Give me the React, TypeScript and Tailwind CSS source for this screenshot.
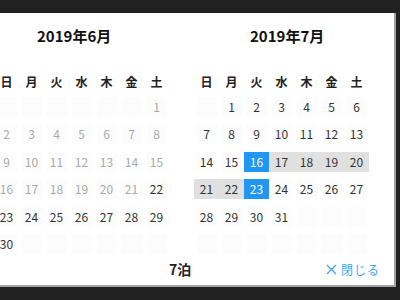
const WEEK = ["日", "月", "火", "水", "木", "金", "土"];

type Day = { n: number | null; tone?: "past" | "on"; sel?: boolean; range?: boolean };

function buildMonth(offset: number, total: number, mark: (d: number) => Day): Day[] {
  const cells: Day[] = [];
  for (let i = 0; i < offset; i++) cells.push({ n: null });
  for (let d = 1; d <= total; d++) cells.push(mark(d));
  while (cells.length < 42) cells.push({ n: null });
  return cells;
}

const june = buildMonth(6, 30, (d) => ({ n: d, tone: d < 22 ? "past" : "on" }));
const july = buildMonth(1, 31, (d) => ({
  n: d,
  tone: "on",
  sel: d === 16 || d === 23,
  range: d > 16 && d < 23,
}));

function Cell({ day }: { day: Day }) {
  if (day.sel) {
    return (
      <div className="flex h-[20px] items-center justify-center bg-[#2196f3] text-white">
        {day.n}
      </div>
    );
  }
  if (day.range) {
    return (
      <div className="flex h-[20px] items-center justify-center bg-[#e0e0e0] text-[#333]">
        {day.n}
      </div>
    );
  }
  return (
    <div className="flex h-[20px] items-center justify-center">
      <div
        className={
          "flex h-full w-[20px] items-center justify-center bg-[#fcfcfc] " +
          (day.tone === "past" ? "text-[#aaa]" : "text-[#333]")
        }
      >
        {day.n}
      </div>
    </div>
  );
}

function Month({ title, days, titlePad }: { title: string; days: Day[]; titlePad: string }) {
  return (
    <div className="w-[175px] shrink-0">
      <div className={"h-[20px] text-[15px] font-bold leading-[20px] text-[#111] whitespace-nowrap " + titlePad}>
        {title}
      </div>
      <div className="mt-[26px] grid grid-cols-7 text-center text-[12px] font-bold leading-[20px] text-[#222]">
        {WEEK.map((w) => (
          <div key={w}>{w}</div>
        ))}
      </div>
      <div className="mt-[5px] grid grid-cols-7 gap-y-[7.4px] text-[12px]">
        {days.map((d, i) => (
          <Cell key={i} day={d} />
        ))}
      </div>
    </div>
  );
}

export default function App() {
  return (
    <div
      className="h-[300px] w-[400px] overflow-hidden bg-[#212121] pt-[13px]"
      style={{ fontFamily: '"Noto Sans CJK JP", "Noto Sans", sans-serif' }}
    >
      <div className="h-[274px] w-[396px] overflow-hidden border-b-2 border-r-2 border-[#a3a3a3] bg-white">
        <div className="ml-[-6px] flex gap-[25px] pt-[13px]">
          <Month title="2019年6月" days={june} titlePad="pl-[43px]" />
          <Month title="2019年7月" days={july} titlePad="pl-[56px]" />
        </div>
        <div className="mt-[6px] flex h-[20px] items-center">
          <span className="ml-[169px] text-[14px] font-bold text-[#222]">7泊</span>
          <button className="ml-auto mr-[14px] flex items-center gap-[4px] text-[12px] tracking-[1px] text-[#42a5f5]">
            <svg width="11" height="11" viewBox="0 0 11 11" fill="none" stroke="#42a5f5" strokeWidth="1.3">
              <path d="M1 1L10 10M10 1L1 10" />
            </svg>
            閉じる
          </button>
        </div>
      </div>
    </div>
  );
}
